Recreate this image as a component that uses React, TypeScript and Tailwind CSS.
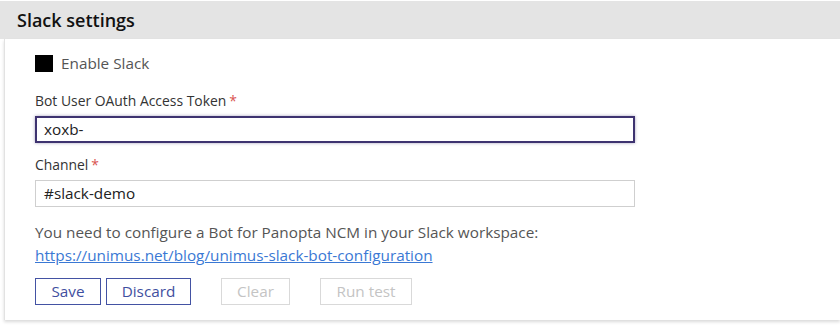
import React from 'react'

const FONT = { fontFamily: '"Open Sans", "Noto Sans", sans-serif' }

function Label({ children }: { children: React.ReactNode }) {
  return (
    <div className="h-[20px] text-[13.9px] leading-[20px] text-[#333]">
      {children}
      <span className="ml-[3px] text-[#d9534f]">*</span>
    </div>
  )
}

function Btn({ children, disabled, className = '' }: { children: React.ReactNode; disabled?: boolean; className?: string }) {
  return (
    <button
      disabled={disabled}
      className={
        'h-[27px] whitespace-nowrap border text-[15.3px] leading-[25px] ' +
        (disabled ? 'border-[#d9d9d9] text-[#c4c4c4]' : 'border-[#4352a3] text-[#3f4fa0]') +
        ' ' +
        className
      }
    >
      {children}
    </button>
  )
}

export default function App() {
  return (
    <div className="h-[328px] w-[840px] overflow-hidden bg-white" style={FONT}>
      <div className="mt-px flex h-[38px] items-center bg-[#e4e4e4] px-[17px] text-[18px] font-semibold text-[#111]">
        Slack settings
      </div>
      <div className="ml-[4px] border-l border-[#e2e2e2] bg-white pb-[15px] pl-[30px] pt-[12px] shadow-[0_2px_3px_rgba(0,0,0,0.15)]">
        <div className="flex h-[24px] items-center">
          <span className="h-[17px] w-[18px] bg-black" />
          <span className="ml-[8px] text-[15.3px] text-[#555]">Enable Slack</span>
        </div>

        <div className="mt-[16px]">
          <Label>Bot User OAuth Access Token</Label>
        </div>
        <div className="mt-[5px] flex h-[27px] w-[600px] items-center border-2 border-[#3e3370] px-[7px] text-[15.3px] text-[#222] shadow-[0_0_3px_rgba(62,51,112,0.45)]">
          xoxb-
        </div>

        <div className="mt-[12px]">
          <Label>Channel</Label>
        </div>
        <div className="mt-[5px] flex h-[27px] w-[600px] items-center border border-[#cfcfcf] px-[8px] text-[15.3px] text-[#222]">
          #slack-demo
        </div>

        <p className="mt-[14px] text-[15.3px] leading-[23px] text-[#555]">
          You need to configure a Bot for Panopta NCM in your Slack workspace:
          <br />
          <a href="#" className="text-[#3a78d4] underline">
            https://unimus.net/blog/unimus-slack-bot-configuration
          </a>
        </p>

        <div className="mt-[11px] flex">
          <Btn className="w-[66px]">Save</Btn>
          <Btn className="ml-[5px] w-[85px]">Discard</Btn>
          <Btn disabled className="ml-[30px] w-[69px]">Clear</Btn>
          <Btn disabled className="ml-[30px] w-[92px]">Run test</Btn>
        </div>
      </div>
    </div>
  )
}
